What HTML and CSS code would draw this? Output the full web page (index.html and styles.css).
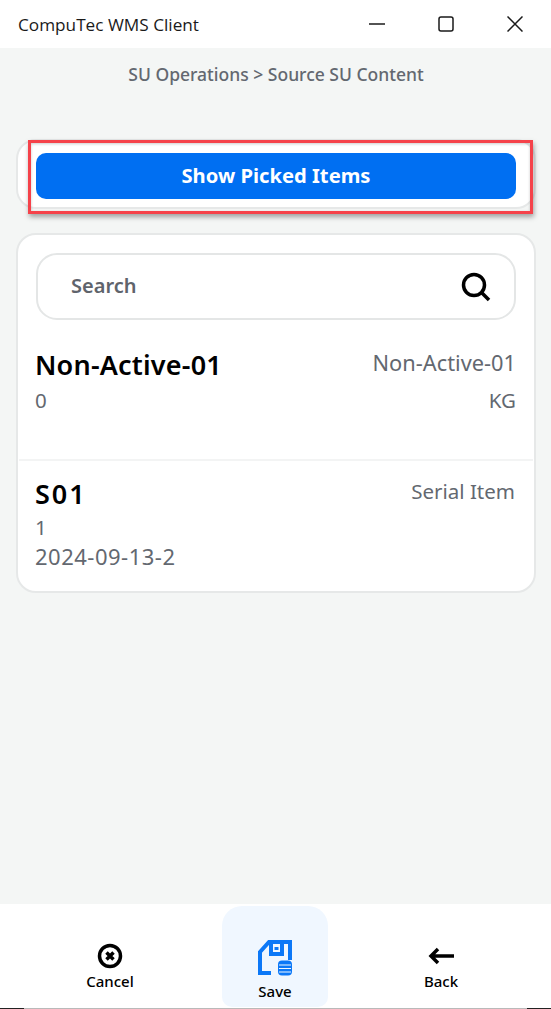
FILE: index.html
```html
<!DOCTYPE html>
<html lang="en">
<head>
<meta charset="utf-8">
<title>CompuTec WMS Client</title>
<link rel="stylesheet" href="styles.css">
</head>
<body>
<div class="window">
  <header class="titlebar">
    <span class="app-name">CompuTec WMS Client</span>
    <div class="win-controls">
      <svg class="win-icon" viewBox="0 0 16 16"><path d="M0 8h16" /></svg>
      <svg class="win-icon" viewBox="0 0 16 16"><rect x="1" y="1" width="14" height="14" rx="2" /></svg>
      <svg class="win-icon" viewBox="0 0 16 16"><path d="M.5.5l15 15M15.500.5l-15 15" /></svg>
    </div>
  </header>
  <main class="content">
    <div class="breadcrumb">SU Operations &gt; Source SU Content</div>
    <section class="card action-card">
      <button class="primary-btn"><span class="btn-label">Show Picked Items</span></button>
      <div class="highlight"></div>
    </section>
    <section class="card list-card">
      <div class="search">
        <span class="search-label">Search</span>
        <svg class="search-icon" viewBox="0 0 30 30"><circle cx="13" cy="13" r="10.500" /><path d="M20.500 20.500L28 28" /></svg>
      </div>
      <div class="item item-first">
        <div class="item-main">
          <div class="item-title">Non-Active-01</div>
          <div class="item-line">0</div>
        </div>
        <div class="item-side">
          <div class="side-top side-code">Non-Active-01</div>
          <div class="side-line">KG</div>
        </div>
      </div>
      <div class="item item-second">
        <div class="item-main">
          <div class="item-title item-title-code">S01</div>
          <div class="item-line">1</div>
          <div class="item-line item-date">2024-09-13-2</div>
        </div>
        <div class="item-side">
          <div class="side-top">Serial Item</div>
        </div>
      </div>
    </section>
  </main>
  <nav class="bottom-bar">
    <div class="nav-item nav-cancel">
      <svg class="nav-icon" viewBox="0 0 26 26"><circle cx="13" cy="13" r="10.500" /><path d="M9.500 9.500l7 7M16.500 9.500l-7 7" /></svg>
      <span>Cancel</span>
    </div>
    <div class="nav-item nav-active">
      <svg class="save-icon" viewBox="0 0 34 36"><path class="save-outline" d="M13 33H2V12L11 2H32V20" /><path class="save-outline" d="M13 3v11h11V3M18.500 7v3" /><rect class="save-db" x="20" y="20.500" width="14" height="15" rx="4" /><path class="save-lines" d="M21 25h12M21 28.500h12M21 32h12" /></svg>
      <span>Save</span>
    </div>
    <div class="nav-item nav-back">
      <svg class="nav-icon" viewBox="0 0 26 26"><path d="M26 13H3M10 6l-7 7 7 7" /></svg>
      <span>Back</span>
    </div>
  </nav>
  <div class="window-edge"></div>
</div>
</body>
</html>
```

FILE: styles.css
```css
* { box-sizing: border-box; }
html, body { margin: 0; padding: 0; }
body { font-family: "Noto Sans", "Open Sans", sans-serif; }
.window {
  width: 551px;
  height: 1009px;
  display: flex;
  flex-direction: column;
  background: #f4f6f5;
  overflow: hidden;
}
.titlebar {
  height: 48px;
  flex: none;
  background: #fff;
  display: flex;
  align-items: center;
  justify-content: space-between;
  padding: 0 28px 0 18px;
}
.app-name { font-family: "Open Sans", sans-serif; font-size: 17.200px; color: #1a1a1a; }
.win-controls { display: flex; gap: 53px; align-items: center; }
.win-icon { width: 16px; height: 16px; fill: none; stroke: #1a1a1a; stroke-width: 1.500; }
.content { flex: 1; padding: 14px 15px 0 16px; }
.breadcrumb { text-align: center; font-size: 17.500px; line-height: 24px; font-weight: 500; color: #636870; }
.card { background: #fff; border: 2px solid #e6e8e8; border-radius: 20px; }
.action-card { position: relative; margin-top: 53px; padding: 12px 18px; height: 70px; }
.primary-btn {
  display: flex;
  align-items: center;
  justify-content: center;
  width: 100%;
  height: 46px;
  padding: 0 0 3px;
  background: #006ff2;
  border: 0;
  border-radius: 10px;
  color: #fff;
  font: 700 20.200px/28px "Noto Sans", sans-serif;
}
.highlight {
  position: absolute;
  left: 10px;
  top: -1px;
  width: 505px;
  height: 74px;
  border: 3px solid #f5424a;
  box-shadow: 1px 3px 5px rgba(0, 0, 0, .35), inset 0 1px 3px rgba(0, 0, 0, .2);
}
.list-card { margin-top: 24px; height: 360px; padding: 18px 18px 0; }
.search {
  height: 67px;
  border: 2px solid #e4e6e6;
  border-radius: 21px;
  display: flex;
  align-items: center;
  justify-content: space-between;
  padding: 0 23px 0 33px;
}
.search-label { font-size: 20px; line-height: 26px; font-weight: 600; color: #5f646c; margin-bottom: 2px; }
.search-icon { width: 30px; height: 30px; fill: none; stroke: #000; stroke-width: 3.500; }
.item { display: flex; justify-content: space-between; }
.item-first { height: 141px; margin: 0 -17px; padding: 27px 17px 0 16px; border-bottom: 2px solid #f3f4f4; }
.item-second { padding: 15px 1px 0 0; margin-left: -1px; }
.item-title { font-size: 27px; line-height: 36px; font-weight: 600; color: #000; letter-spacing: .2px; }
.item-title-code { letter-spacing: 2px; }
.item-line { font-size: 20.500px; line-height: 29px; color: #636870; }
.item-first .item-line { margin-top: 3px; }
.item-second .item-line:nth-child(2) { margin-top: 1px; }
.item-date { font-size: 22px; letter-spacing: .5px; }
.item-side { text-align: right; font-size: 20.500px; color: #636870; }
.side-top { line-height: 30px; margin-top: 1px; }
.item-second .side-top { margin-top: 0; }
.side-code { font-size: 21.800px; }
.side-line { line-height: 29px; margin-top: 8px; }
.bottom-bar {
  height: 105px;
  flex: none;
  background: #fff;
  display: grid;
  grid-template-columns: 222px 106px 223px;
}
.nav-item {
  display: flex;
  flex-direction: column;
  align-items: center;
  font-size: 15px;
  font-weight: 500;
  line-height: 20px;
  color: #000;
  padding-top: 39px;
}
.nav-cancel { padding-right: 2px; }
.nav-back { padding-left: 3px; }
.nav-active {
  margin: 2px 0 2px;
  padding-top: 34px;
  background: #f0f7ff;
  border-radius: 20px 20px 10px 10px;
}
.nav-active span { margin-top: 5px; }
.nav-icon { width: 26px; height: 26px; fill: none; stroke: #000; stroke-width: 3.500; margin-bottom: 2px; }
.save-icon { width: 34px; height: 36px; }
.save-outline { fill: none; stroke: #0c78f7; stroke-width: 4; }
.save-db { fill: #0c78f7; }
.save-lines { fill: none; stroke: #f0f7ff; stroke-width: 1.200; }
.window-edge {
  height: 1px;
  flex: none;
  background: linear-gradient(90deg, #222 24px, #b9b9b9 24px, #b9b9b9 527px, #222 527px);
  margin-top: -1px;
  position: relative;
}
```
